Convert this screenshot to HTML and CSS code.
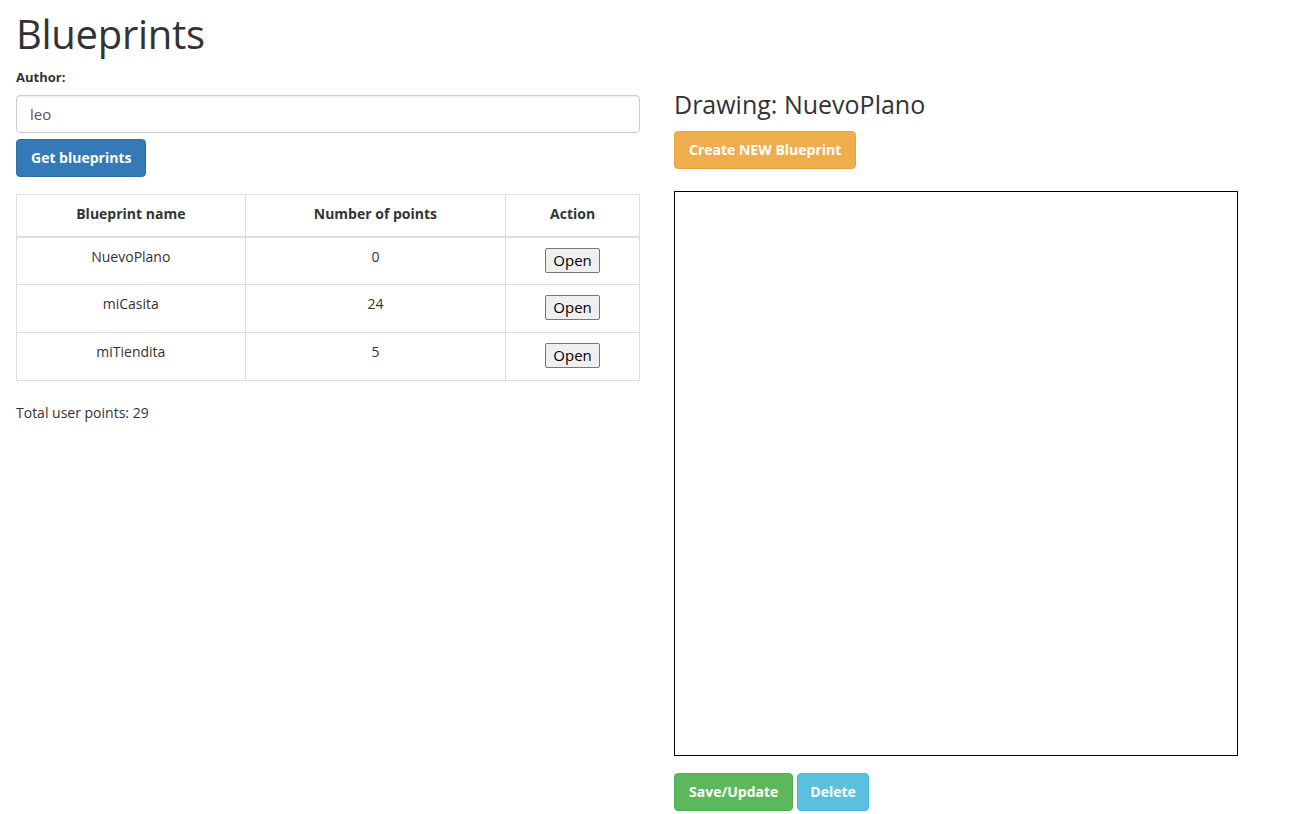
FILE: index.html
```html
<!DOCTYPE html>
<html lang="en">
<head>
<meta charset="utf-8">
<title>Blueprints</title>
<link rel="stylesheet" href="styles.css">
</head>
<body>
<div class="page">
  <div class="left">
    <h1 class="title">Blueprints</h1>
    <label class="label" for="author">Author:</label>
    <input id="author" class="input" type="text" value="leo">
    <button class="btn btn-primary">Get blueprints</button>
    <table class="table">
      <thead>
        <tr><th class="c1">Blueprint name</th><th class="c2">Number of points</th><th class="c3">Action</th></tr>
      </thead>
      <tbody>
        <tr><td>NuevoPlano</td><td>0</td><td><button class="open">Open</button></td></tr>
        <tr><td>miCasita</td><td>24</td><td><button class="open">Open</button></td></tr>
        <tr><td>miTiendita</td><td>5</td><td><button class="open">Open</button></td></tr>
      </tbody>
    </table>
    <p class="total">Total user points: 29</p>
  </div>
  <div class="right">
    <h3 class="subtitle">Drawing: NuevoPlano</h3>
    <button class="btn btn-warning">Create NEW Blueprint</button>
    <div class="canvas"></div>
    <div class="actions">
      <button class="btn btn-success">Save/Update</button>
      <button class="btn btn-info">Delete</button>
    </div>
  </div>
</div>
</body>
</html>
```
FILE: styles.css
```css
* { box-sizing: border-box; }
body {
  margin: 0;
  font-family: "Open Sans", "DejaVu Sans", sans-serif;
  font-size: 14px;
  color: #333;
  background: #fff;
}
.page {
  display: flex;
  gap: 34px;
  padding: 0 16px;
}
.left {
  width: 624px;
  display: flex;
  flex-direction: column;
  align-items: flex-start;
}
.right {
  width: 564px;
  display: flex;
  flex-direction: column;
  align-items: flex-start;
}
.title {
  margin: 10px 0 0;
  font-size: 40px;
  line-height: 48px;
  font-weight: 500;
  letter-spacing: -0.3px;
}
.label {
  margin-top: 9px;
  font-weight: 700;
  font-size: 13px;
  line-height: 20px;
}
.input {
  margin-top: 8px;
  width: 100%;
  height: 38px;
  padding: 6px 13px;
  font: inherit;
  font-size: 15px;
  color: #555;
  border: 1px solid #ccc;
  border-radius: 4px;
  box-shadow: inset 0 1px 1px rgba(0,0,0,.075);
}
.btn {
  font: inherit;
  font-weight: 700;
  font-size: 14px;
  line-height: 20px;
  padding: 8px 14px;
  border: 1px solid transparent;
  border-radius: 4px;
  color: #fff;
  cursor: pointer;
}
.left .btn { margin-top: 6px; }
.btn-primary { background: #337ab7; border-color: #2e6da4; }
.btn-warning { background: #f0ad4e; border-color: #eea236; }
.btn-success { background: #5cb85c; border-color: #4cae4c; padding: 8px 14px; }
.btn-info { background: #5bc0de; border-color: #46b8da; padding: 8px 12px; }
.table {
  margin-top: 17px;
  width: 100%;
  border-collapse: collapse;
  border: 1px solid #ddd;
}
.table th, .table td {
  border: 1px solid #ddd;
  text-align: center;
  padding: 8px;
  line-height: 20px;
}
.table th {
  height: 42px;
  font-weight: 700;
  border-bottom: 2px solid #ddd;
  padding-top: 9px;
  vertical-align: top;
}
.table td {
  height: 48px;
  vertical-align: top;
  padding-top: 9px;
}
.c1 { width: 229px; }
.c2 { width: 261px; }
.c3 { width: 134px; }
.open {
  font: inherit;
  font-size: 15px;
  line-height: 19px;
  padding: 2px 7px;
  margin-top: 1px;
  background: #efefef;
  border: 1px solid #767676;
  border-radius: 2px;
  color: #000;
}
.total {
  margin: 22px 0 0;
  line-height: 20px;
}
.subtitle {
  margin: 88px 0 0;
  font-size: 25px;
  line-height: 32px;
  font-weight: 500;
}
.right .btn-warning { margin-top: 11px; }
.canvas {
  margin-top: 22px;
  width: 564px;
  height: 565px;
  border: 1px solid #000;
}
.actions {
  margin-top: 17px;
  display: flex;
  gap: 4px;
}
```
